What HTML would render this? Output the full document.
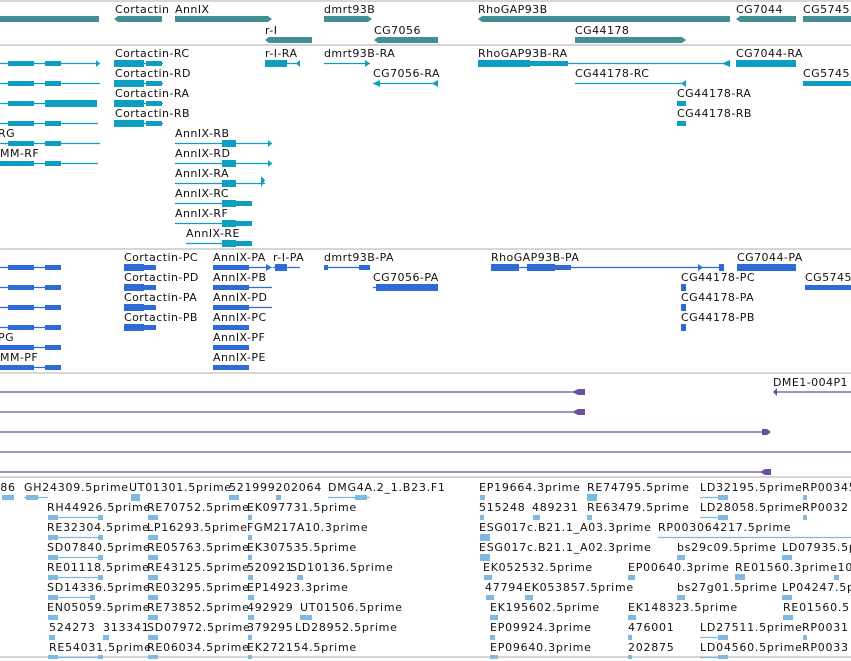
<!DOCTYPE html>
<html><head><meta charset="utf-8"><style>
html,body{margin:0;padding:0;background:#fff;width:851px;height:661px;overflow:hidden}
svg{display:block}
text{font-family:"DejaVu Sans","Liberation Sans",sans-serif;font-size:11px;fill:#111;letter-spacing:0.45px}
.e text{letter-spacing:0.75px}
</style></head><body>
<svg width="851" height="661" viewBox="0 0 851 661" xmlns="http://www.w3.org/2000/svg">
<g stroke="#c8c8c8" stroke-width="1.5">
<line x1="0" y1="1" x2="851" y2="1"/><line x1="0" y1="45" x2="851" y2="45"/>
<line x1="0" y1="249" x2="851" y2="249"/><line x1="0" y1="373" x2="851" y2="373"/>
<line x1="0" y1="477" x2="851" y2="477"/><line x1="0" y1="657" x2="851" y2="657"/>
</g>
<!-- genes -->
<g fill="#438f94">
<rect x="0" y="16" width="99" height="6"/>
<path d="M118 16H162V22H118L114 19Z"/>
<path d="M175 16H268L272 19L268 22H175Z"/>
<path d="M269 37H312V43H269L265 40Z"/>
<path d="M324 16H368L372 19L368 22H324Z"/>
<path d="M378 37H438V43H378L374 40Z"/>
<path d="M482 16H730V22H482L478 19Z"/>
<path d="M575 37H682L686 40L682 43H575Z"/>
<path d="M740 16H796V22H740L736 19Z"/>
<rect x="803" y="16" width="48" height="6"/>
</g>
<text x="115" y="13">Cortactin</text><text x="175" y="13">AnnIX</text><text x="265" y="34">r-I</text>
<text x="324" y="13">dmrt93B</text><text x="374" y="34">CG7056</text><text x="478" y="13">RhoGAP93B</text>
<text x="575" y="34">CG44178</text><text x="736" y="13">CG7044</text><text x="803" y="13">CG5745</text>
<!-- transcripts -->
<g fill="#0e9ec0" stroke="#0e9ec0">
<g stroke-width="1.2"><line x1="0" y1="63.5" x2="100" y2="63.5"/><line x1="0" y1="83.5" x2="100" y2="83.5"/><line x1="0" y1="103.5" x2="96" y2="103.5"/><line x1="0" y1="123.5" x2="98" y2="123.5"/><line x1="0" y1="143.5" x2="100" y2="143.5"/><line x1="0" y1="163.5" x2="98" y2="163.5"/>
<line x1="114" y1="63.5" x2="163" y2="63.5"/><line x1="114" y1="83.5" x2="163" y2="83.5"/><line x1="114" y1="103.5" x2="163" y2="103.5"/><line x1="114" y1="123.5" x2="163" y2="123.5"/>
<line x1="175" y1="143.5" x2="272" y2="143.5"/><line x1="175" y1="163.5" x2="272" y2="163.5"/><line x1="175" y1="183.5" x2="265" y2="183.5"/><line x1="175" y1="203.5" x2="252" y2="203.5"/><line x1="175" y1="223.5" x2="252" y2="223.5"/><line x1="186" y1="243.5" x2="252" y2="243.5"/>
<line x1="265" y1="63.5" x2="300" y2="63.5"/><line x1="324" y1="63.5" x2="370" y2="63.5"/><line x1="373" y1="83.5" x2="438" y2="83.5"/>
<line x1="478" y1="63.5" x2="730" y2="63.5"/><line x1="575" y1="83.5" x2="686" y2="83.5"/><line x1="736" y1="63.5" x2="796" y2="63.5"/><line x1="803" y1="83.5" x2="851" y2="83.5"/></g>
<g stroke="none">
<rect x="8" y="61" width="26" height="5"/><rect x="45" y="61" width="16" height="5"/><rect x="8" y="81" width="26" height="5"/><rect x="45" y="81" width="16" height="5"/><rect x="8" y="101" width="26" height="5"/><rect x="45" y="100" width="52" height="7"/><rect x="8" y="121" width="26" height="5"/><rect x="45" y="121" width="16" height="5"/><rect x="8" y="141" width="26" height="5"/><rect x="45" y="141" width="16" height="5"/><rect x="0" y="161" width="34" height="5"/><rect x="45" y="161" width="16" height="5"/>
<rect x="114" y="60" width="30" height="7"/><rect x="146" y="61" width="16" height="5"/><rect x="114" y="80" width="30" height="7"/><rect x="146" y="81" width="16" height="5"/><rect x="114" y="100" width="30" height="7"/><rect x="146" y="101" width="16" height="5"/><rect x="114" y="120" width="30" height="7"/><rect x="146" y="121" width="16" height="5"/>
<rect x="222" y="140" width="14" height="7"/><rect x="222" y="160" width="14" height="7"/><rect x="222" y="180" width="14" height="7"/><rect x="222" y="200" width="14" height="7"/><rect x="236" y="201" width="16" height="5"/><rect x="222" y="220" width="14" height="7"/><rect x="236" y="221" width="16" height="5"/><rect x="222" y="240" width="14" height="7"/><rect x="236" y="241" width="16" height="5"/>
<rect x="265" y="60" width="22" height="7"/><rect x="478" y="60" width="52" height="7"/><rect x="530" y="61" width="38" height="5"/><rect x="736" y="60" width="60" height="7"/><rect x="803" y="81" width="48" height="5"/>
<path d="M96 60L100 63.5L96 67Z M300 60L296 63.5L300 67Z M365 60L370 63.5L365 67Z M373 83.5L380 80V87Z M438 80L432 83.5L438 87Z M686 80L681 83.5L686 87Z M730 60L722 63.5L730 67Z M268 140L272 143.5L268 147Z M268 160L272 163.5L268 167Z M265 180L261 176V187Z"/>
<rect x="677" y="101" width="9" height="5"/><rect x="677" y="121" width="9" height="5"/>
</g></g>
<text x="115" y="57">Cortactin-RC</text><text x="115" y="77">Cortactin-RD</text><text x="115" y="97">Cortactin-RA</text><text x="115" y="117">Cortactin-RB</text>
<text x="-2" y="137">RG</text><text x="0" y="157">MM-RF</text>
<text x="175" y="137">AnnIX-RB</text><text x="175" y="157">AnnIX-RD</text><text x="175" y="177">AnnIX-RA</text><text x="175" y="197">AnnIX-RC</text><text x="175" y="217">AnnIX-RF</text><text x="186" y="237">AnnIX-RE</text>
<text x="265" y="57">r-I-RA</text><text x="324" y="57">dmrt93B-RA</text><text x="373" y="77">CG7056-RA</text>
<text x="478" y="57">RhoGAP93B-RA</text><text x="575" y="77">CG44178-RC</text><text x="677" y="97">CG44178-RA</text><text x="677" y="117">CG44178-RB</text>
<text x="736" y="57">CG7044-RA</text><text x="803" y="77">CG5745</text>
<!-- proteins -->
<g fill="#2e6bd6" stroke="#2e6bd6">
<g stroke-width="1.2"><line x1="0" y1="267.5" x2="61" y2="267.5"/><line x1="0" y1="287.5" x2="61" y2="287.5"/><line x1="0" y1="307.5" x2="61" y2="307.5"/><line x1="0" y1="327.5" x2="61" y2="327.5"/><line x1="0" y1="347.5" x2="61" y2="347.5"/><line x1="0" y1="367.5" x2="61" y2="367.5"/>
<line x1="213" y1="267.5" x2="266" y2="267.5"/><line x1="213" y1="287.5" x2="272" y2="287.5"/><line x1="213" y1="307.5" x2="272" y2="307.5"/><line x1="273" y1="267.5" x2="300" y2="267.5"/><line x1="324" y1="267.5" x2="370" y2="267.5"/><line x1="373" y1="287.5" x2="438" y2="287.5"/><line x1="491" y1="267.5" x2="724" y2="267.5"/><line x1="805" y1="287.5" x2="851" y2="287.5"/></g>
<g stroke="none">
<rect x="8" y="265" width="26" height="5"/><rect x="45" y="265" width="16" height="5"/><rect x="8" y="285" width="26" height="5"/><rect x="45" y="285" width="16" height="5"/><rect x="8" y="305" width="26" height="5"/><rect x="45" y="305" width="16" height="5"/><rect x="8" y="325" width="26" height="5"/><rect x="45" y="325" width="16" height="5"/><rect x="0" y="345" width="34" height="5"/><rect x="45" y="345" width="16" height="5"/><rect x="0" y="365" width="34" height="5"/><rect x="45" y="365" width="16" height="5"/>
<rect x="124" y="264" width="20" height="7"/><rect x="144" y="265" width="12" height="5"/><rect x="124" y="284" width="20" height="7"/><rect x="144" y="285" width="12" height="5"/><rect x="124" y="304" width="20" height="7"/><rect x="144" y="305" width="12" height="5"/><rect x="124" y="324" width="20" height="7"/><rect x="144" y="325" width="12" height="5"/>
<rect x="213" y="265" width="36" height="5"/><rect x="213" y="285" width="36" height="5"/><rect x="213" y="305" width="36" height="5"/><rect x="213" y="325" width="36" height="5"/><rect x="213" y="345" width="36" height="5"/><rect x="213" y="365" width="36" height="5"/>
<rect x="275" y="264" width="12" height="7"/><rect x="324" y="265" width="4" height="5"/><rect x="359" y="265" width="11" height="5"/><rect x="376" y="284" width="62" height="7"/>
<rect x="491" y="264" width="28" height="7"/><rect x="527" y="264" width="28" height="7"/><rect x="555" y="265" width="16" height="5"/><rect x="719" y="264" width="5" height="7"/>
<rect x="737" y="264" width="59" height="7"/><rect x="681" y="284" width="5" height="7"/><rect x="681" y="304" width="5" height="7"/><rect x="681" y="324" width="5" height="7"/>
<rect x="805" y="285" width="46" height="5"/><path d="M266 264L272 267.5L266 271Z M698 264L703 267.5L698 271Z"/>
</g></g>
<text x="124" y="261">Cortactin-PC</text><text x="124" y="281">Cortactin-PD</text><text x="124" y="301">Cortactin-PA</text><text x="124" y="321">Cortactin-PB</text>
<text x="-2" y="341">PG</text><text x="0" y="361">MM-PF</text>
<text x="213" y="261">AnnIX-PA</text><text x="213" y="281">AnnIX-PB</text><text x="213" y="301">AnnIX-PD</text><text x="213" y="321">AnnIX-PC</text><text x="213" y="341">AnnIX-PF</text><text x="213" y="361">AnnIX-PE</text>
<text x="273" y="261">r-I-PA</text><text x="324" y="261">dmrt93B-PA</text><text x="373" y="281">CG7056-PA</text><text x="491" y="261">RhoGAP93B-PA</text>
<text x="737" y="261">CG7044-PA</text><text x="681" y="281">CG44178-PC</text><text x="681" y="301">CG44178-PA</text><text x="681" y="321">CG44178-PB</text><text x="805" y="281">CG5745</text>
<!-- purple -->
<g stroke="#6a4fa3" stroke-width="1.3"><line x1="0" y1="392" x2="580" y2="392"/><line x1="0" y1="412" x2="580" y2="412"/><line x1="0" y1="432" x2="770" y2="432"/><line x1="0" y1="452" x2="851" y2="452"/><line x1="0" y1="472" x2="770" y2="472"/><line x1="776" y1="392" x2="851" y2="392"/></g>
<g fill="#6a4fa3"><path d="M578 389H585V395H578L572 392Z M578 409H585V415H578L572 412Z M762 429H767L771 432L767 435H762Z M765 469H771V475H765L760 472Z M773 392L777 388V396Z"/></g>
<text x="773" y="386">DME1-004P1</text>
<!-- ESTs -->
<g class="e">
<text x="-4" y="491">.86</text><text x="24" y="491">GH24309.5prime</text><text x="129" y="491">UT01301.5prime</text><text x="229" y="491">521999202064</text><text x="328" y="491">DMG4A.2_1.B23.F1</text><text x="479" y="491">EP19664.3prime</text><text x="587" y="491">RE74795.5prime</text><text x="700" y="491">LD32195.5prime</text><text x="802" y="491">RP00345</text>
<text x="47" y="511">RH44926.5prime</text><text x="147" y="511">RE70752.5prime</text><text x="247" y="511">EK097731.5prime</text><text x="479" y="511">515248</text><text x="532" y="511">489231</text><text x="587" y="511">RE63479.5prime</text><text x="700" y="511">LD28058.5prime</text><text x="802" y="511">RP0032</text>
<text x="47" y="531">RE32304.5prime</text><text x="147" y="531">LP16293.5prime</text><text x="247" y="531">FGM217A10.3prime</text><text x="479" y="531">ESG017c.B21.1_A03.3prime</text><text x="658" y="531">RP003064217.5prime</text>
<text x="47" y="551">SD07840.5prime</text><text x="147" y="551">RE05763.5prime</text><text x="247" y="551">EK307535.5prime</text><text x="479" y="551">ESG017c.B21.1_A02.3prime</text><text x="677" y="551">bs29c09.5prime</text><text x="782" y="551">LD07935.5p</text>
<text x="47" y="571">RE01118.5prime</text><text x="147" y="571">RE43125.5prime</text><text x="247" y="571">520921</text><text x="290" y="571">SD10136.5prime</text><text x="483" y="571">EK052532.5prime</text><text x="628" y="571">EP00640.3prime</text><text x="735" y="571">RE01560.3prime10</text>
<text x="47" y="591">SD14336.5prime</text><text x="147" y="591">RE03295.5prime</text><text x="247" y="591">EP14923.3prime</text><text x="485" y="591">47794</text><text x="524" y="591">EK053857.5prime</text><text x="677" y="591">bs27g01.5prime</text><text x="782" y="591">LP04247.5p</text>
<text x="47" y="611">EN05059.5prime</text><text x="147" y="611">RE73852.5prime</text><text x="247" y="611">492929</text><text x="300" y="611">UT01506.5prime</text><text x="490" y="611">EK195602.5prime</text><text x="628" y="611">EK148323.5prime</text><text x="783" y="611">RE01560.5</text>
<text x="49" y="631">524273</text><text x="103" y="631">313341</text><text x="147" y="631">SD07972.5prime</text><text x="247" y="631">379295</text><text x="295" y="631">LD28952.5prime</text><text x="490" y="631">EP09924.3prime</text><text x="628" y="631">476001</text><text x="700" y="631">LD27511.5prime</text><text x="802" y="631">RP0031</text>
<text x="49" y="651">RE54031.5prime</text><text x="147" y="651">RE06034.5prime</text><text x="247" y="651">EK272154.5prime</text><text x="490" y="651">EP09640.3prime</text><text x="628" y="651">202875</text><text x="700" y="651">LD04560.5prime</text><text x="802" y="651">RP0033</text>
</g>
<g stroke="#7fb8e0" stroke-width="1.2"><line x1="24" y1="497.5" x2="48" y2="497.5"/><line x1="328" y1="497.5" x2="370" y2="497.5"/><line x1="48" y1="517.5" x2="103" y2="517.5"/><line x1="48" y1="537.5" x2="103" y2="537.5"/><line x1="48" y1="557.5" x2="103" y2="557.5"/><line x1="48" y1="577.5" x2="103" y2="577.5"/><line x1="48" y1="597.5" x2="95" y2="597.5"/><line x1="48" y1="657.5" x2="103" y2="657.5"/><line x1="700" y1="497.5" x2="728" y2="497.5"/><line x1="700" y1="517.5" x2="728" y2="517.5"/><line x1="658" y1="537.5" x2="851" y2="537.5"/><line x1="700" y1="637.5" x2="728" y2="637.5"/><line x1="700" y1="657.5" x2="728" y2="657.5"/></g>
<g fill="#7fb8e0">
<rect x="2" y="495" width="12" height="5"/><rect x="26" y="495" width="12" height="5"/><rect x="131" y="494" width="9" height="7"/><rect x="229" y="495" width="10" height="5"/><rect x="276" y="495" width="5" height="5"/><rect x="355" y="495" width="12" height="5"/>
<rect x="48" y="515" width="10" height="5"/><rect x="98" y="515" width="5" height="5"/><rect x="48" y="535" width="10" height="5"/><rect x="98" y="535" width="5" height="5"/><rect x="48" y="555" width="10" height="5"/><rect x="98" y="555" width="5" height="5"/><rect x="48" y="575" width="10" height="5"/><rect x="98" y="575" width="5" height="5"/><rect x="48" y="595" width="10" height="5"/><rect x="90" y="595" width="5" height="5"/><rect x="48" y="615" width="10" height="5"/><rect x="49" y="635" width="6" height="5"/><rect x="103" y="635" width="6" height="5"/><rect x="48" y="655" width="10" height="4"/><rect x="98" y="655" width="5" height="4"/>
<rect x="148" y="515" width="10" height="5"/><rect x="148" y="535" width="10" height="5"/><rect x="148" y="555" width="10" height="5"/><rect x="148" y="575" width="10" height="5"/><rect x="148" y="595" width="10" height="5"/><rect x="148" y="615" width="10" height="5"/><rect x="148" y="635" width="10" height="5"/><rect x="148" y="655" width="10" height="4"/>
<rect x="248" y="515" width="4" height="5"/><rect x="248" y="535" width="4" height="5"/><rect x="248" y="555" width="4" height="5"/><rect x="248" y="575" width="5" height="5"/><rect x="297" y="575" width="6" height="5"/><rect x="248" y="595" width="6" height="5"/><rect x="248" y="615" width="6" height="5"/><rect x="300" y="615" width="12" height="5"/><rect x="248" y="635" width="4" height="5"/><rect x="248" y="655" width="4" height="4"/>
<rect x="480" y="495" width="5" height="5"/><rect x="587" y="494" width="10" height="7"/><rect x="480" y="515" width="4" height="5"/><rect x="533" y="515" width="7" height="5"/><rect x="587" y="515" width="5" height="5"/><rect x="480" y="534" width="10" height="7"/><rect x="480" y="554" width="10" height="7"/><rect x="484" y="575" width="8" height="5"/><rect x="486" y="595" width="8" height="5"/><rect x="525" y="595" width="8" height="5"/><rect x="490" y="615" width="8" height="5"/><rect x="490" y="635" width="5" height="5"/><rect x="490" y="655" width="8" height="4"/>
<rect x="718" y="495" width="10" height="5"/><rect x="718" y="515" width="10" height="5"/><rect x="718" y="635" width="10" height="5"/><rect x="718" y="655" width="10" height="4"/><rect x="803" y="495" width="4" height="5"/><rect x="803" y="515" width="4" height="5"/><rect x="803" y="635" width="4" height="5"/>
<rect x="677" y="555" width="8" height="5"/><rect x="782" y="555" width="10" height="5"/><rect x="628" y="575" width="7" height="5"/><rect x="735" y="574" width="10" height="6"/><rect x="834" y="575" width="5" height="5"/><rect x="677" y="595" width="8" height="5"/><rect x="782" y="595" width="10" height="5"/><rect x="628" y="615" width="8" height="5"/><rect x="783" y="615" width="10" height="5"/><rect x="628" y="635" width="4" height="5"/><rect x="628" y="655" width="4" height="4"/>
</g>
</svg>
</body></html>
